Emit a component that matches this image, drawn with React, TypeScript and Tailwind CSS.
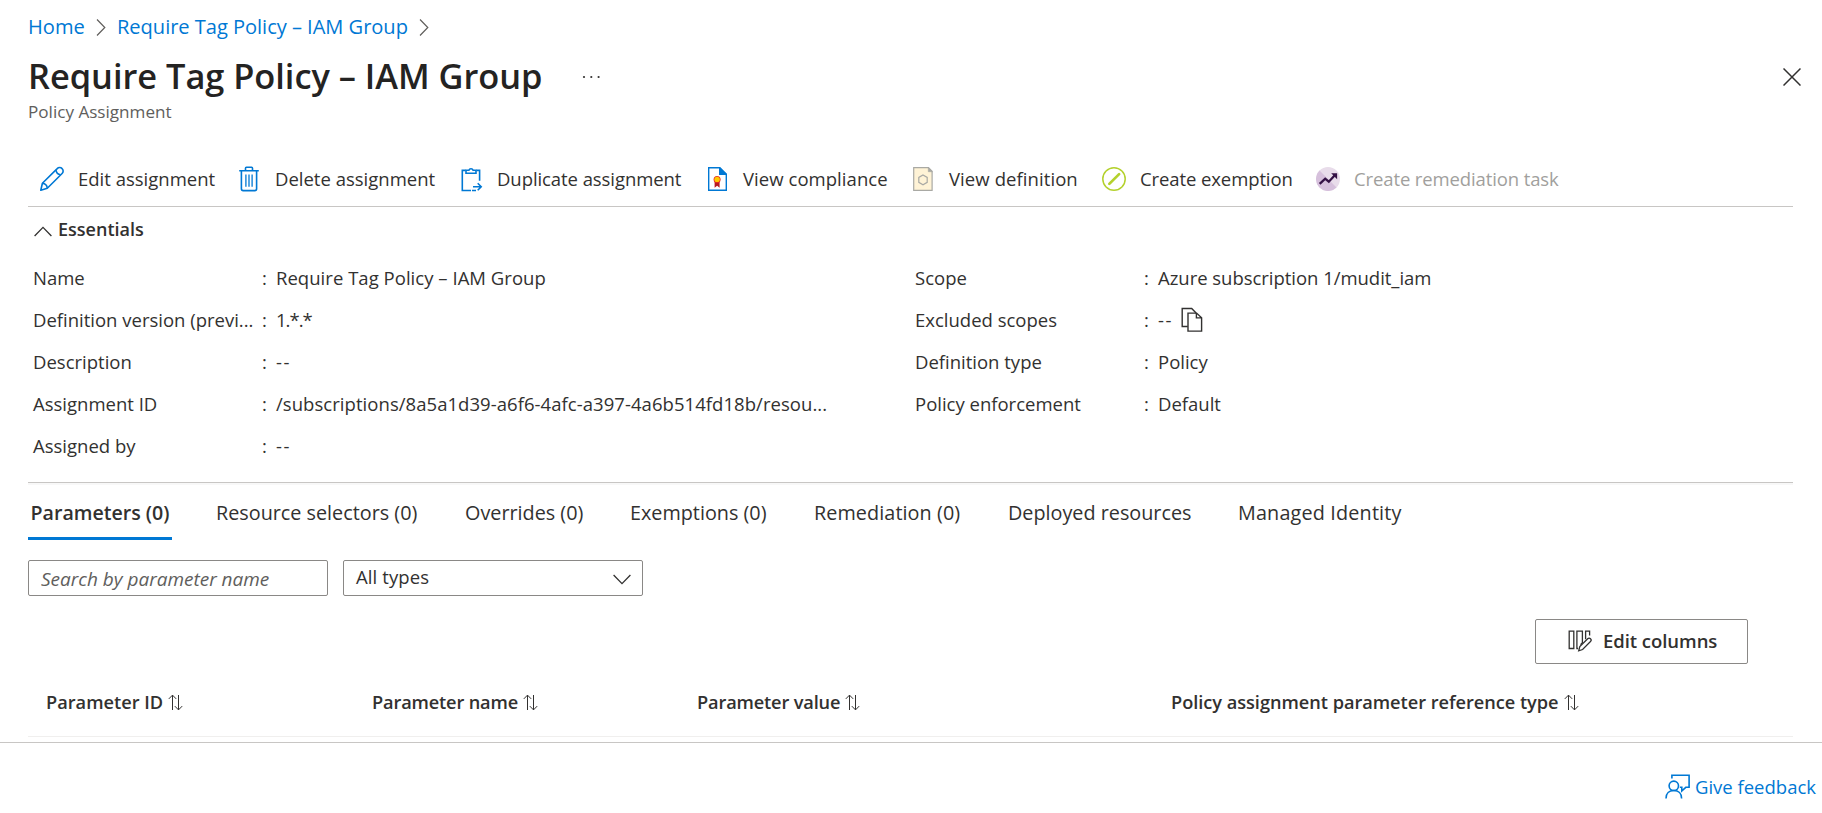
import React from "react";

function Chevron() {
  return (
    <svg width="11" height="19" viewBox="0 0 11 19" fill="none" stroke="#605e5c" strokeWidth="1.2">
      <path d="M1 1.5 8.8 9.5 1 17.5" />
    </svg>
  );
}

function PencilIcon() {
  return (
    <svg className="shrink-0" width="26" height="26" viewBox="0 0 26 26" fill="none" stroke="#0078d4" strokeWidth="1.6" strokeLinejoin="round">
      <path d="M1.8 24.2 3.4 17.3 18.2 2.6a3.4 3.4 0 0 1 4.9 0 3.4 3.4 0 0 1 0 4.9L8.3 22.2Z" />
      <path d="M17 4.1c.3 2.6 2 4.3 4.6 4.6M3.4 17.3c2.7.3 4.6 2.1 4.9 4.9" />
    </svg>
  );
}

function TrashIcon() {
  return (
    <svg width="24" height="26" viewBox="0 0 24 26" fill="none" stroke="#0078d4" strokeWidth="1.6">
      <path d="M2.2 4.8h19.6M8.5 4.5V2.2q0-.9.9-.9h5.2q.9 0 .9.9v2.3M4.4 5v17.8q0 1.8 1.8 1.8h11.6q1.8 0 1.8-1.8V5" />
      <path d="M8.9 8.5v12.3M12 8.5v12.3M15.1 8.5v12.3" strokeWidth="1.3" />
    </svg>
  );
}

function DuplicateIcon() {
  return (
    <svg width="24" height="26" viewBox="0 0 24 26" fill="none" stroke="#0078d4" strokeWidth="1.6">
      <path d="M12 24.5H3.3V4.4h3.4M17.3 4.4h3.3v10.4" />
      <path d="M7 7.2V4.3h2.9a2.2 2.2 0 0 1 4.2 0H17v2.9Z" />
      <path d="M14 20.8h7.8M18.7 17.3l3.5 3.5-3.5 3.5M13 24.5h4" />
    </svg>
  );
}

function ComplianceIcon() {
  return (
    <svg width="24" height="26" viewBox="0 0 24 26">
      <path d="M3.7 1.7h11l6.6 6.6v16H3.7Z" fill="#fff" stroke="#0078d4" strokeWidth="1.4" />
      <path d="M14 1h.9L22 8.1V9h-8Z" fill="#0078d4" />
      <path d="M9.6 15h5v6.8l-2.5-2-2.5 2Z" fill="#b81820" />
      <circle cx="12.1" cy="13.4" r="3.5" fill="#e62b1e" />
      <circle cx="12.1" cy="13.4" r="2.7" fill="#ffca00" />
    </svg>
  );
}

function DefinitionIcon() {
  return (
    <svg width="24" height="26" viewBox="0 0 24 26" stroke="#a9a9a4">
      <path d="M2.7 1.7h14.8l3.6 3.6v19H2.7Z" fill="#fff3d6" strokeWidth="1.2" />
      <path d="M17.3 1.5v4.2h4.2Z" fill="#a9a9a4" strokeWidth=".6" />
      <path d="m12 9 4.2 2.4v4.9L12 18.7l-4.2-2.4v-4.9Z" fill="none" strokeWidth="1.2" />
    </svg>
  );
}

function ExemptionIcon() {
  return (
    <svg width="24" height="24" viewBox="0 0 24 24" fill="none" stroke="#b4d12d">
      <circle cx="12" cy="12" r="11.2" strokeWidth="1.5" />
      <path d="m7.3 16.9 9.8-9.8" strokeWidth="2.7" strokeLinecap="round" />
    </svg>
  );
}

function RemediationIcon() {
  return (
    <svg width="24" height="24" viewBox="0 0 24 24" fill="none">
      <circle cx="12" cy="12" r="12" fill="#e8dcea" />
      <path d="M3.5 3.5a12 12 0 1 0 17 17Z" fill="#d6c0dc" />
      <path d="m3.7 16.9 5.5-5.2 3.6 3 6-6.4" stroke="#341145" strokeWidth="2.3" />
      <path d="M15.2 6.3h5.9v5.9Z" fill="#341145" />
    </svg>
  );
}

function CopyIcon() {
  return (
    <svg width="22" height="26" viewBox="0 0 22 26" fill="none" stroke="#323130" strokeWidth="1.4">
      <path d="M6.8 19.5H1.2V1.5h9.5l4.4 4.6" />
      <path d="M7 6.1h8.6l5 4.6v13.4H7ZM15.4 6.3v4.6h5" />
    </svg>
  );
}

function ColumnsIcon() {
  return (
    <svg width="24" height="22" viewBox="0 0 24 22" fill="none" stroke="#323130" strokeWidth="1.3">
      <path d="M1.2 1.2h4.6v17.3H1.2ZM12.5 14.6l1.9-2V1.2H8.9v17.3h1.2M17.6 9.3V1.2h4v4.4" />
      <path d="m10.7 20.8 1.1-4.2 7.9-7.9a1.9 1.9 0 0 1 2.8 2.8l-7.9 8Z" />
    </svg>
  );
}

function SortIcon() {
  return (
    <svg className="mt-[2px]" width="15" height="17" viewBox="0 0 15 17" fill="none" stroke="#323130" strokeWidth="1">
      <path d="M4.5 16V1.2M.8 4.9l3.7-3.8 3.7 3.8M10.5 1v14.8M6.8 12.1l3.7 3.8 3.7-3.8" />
    </svg>
  );
}

function FeedbackIcon() {
  return (
    <svg width="25" height="25" viewBox="0 0 25 25" fill="none" stroke="#0078d4" strokeWidth="1.6">
      <circle cx="8.8" cy="11.8" r="4.7" />
      <path d="M1 24.4c0-4.8 3.2-7.9 7.8-7.9s7.8 3.1 7.8 7.9M6.9 4.6V1.2h17.2v12.1h-3.3l-4 3.7v-3.7h-2" />
    </svg>
  );
}

const commands = [
  { label: "Edit assignment", icon: <PencilIcon />, width: "w-[197px]", tone: "text-[#323130]" },
  { label: "Delete assignment", icon: <TrashIcon />, width: "w-[222px]", tone: "text-[#323130]" },
  { label: "Duplicate assignment", icon: <DuplicateIcon />, width: "w-[246px]", tone: "text-[#323130] tracking-[-0.07px]" },
  { label: "View compliance", icon: <ComplianceIcon />, width: "w-[206px]", tone: "text-[#323130] tracking-[0.05px]" },
  { label: "View definition", icon: <DefinitionIcon />, width: "w-[191px]", tone: "text-[#323130] tracking-[0.08px]" },
  { label: "Create exemption", icon: <ExemptionIcon />, width: "w-[214px]", tone: "text-[#323130] tracking-[-0.1px]" },
  { label: "Create remediation task", icon: <RemediationIcon />, width: "w-[260px]", tone: "text-[#a19f9d] tracking-[-0.12px]" },
];

const left = [
  { label: "Name", value: "Require Tag Policy – IAM Group", spacing: "tracking-[0.03px]" },
  { label: "Definition version (previ...", value: "1.*.*", spacing: "tracking-[-1px]" },
  { label: "Description", value: "--", spacing: "tracking-[1.6px]" },
  { label: "Assignment ID", value: "/subscriptions/8a5a1d39-a6f6-4afc-a397-4a6b514fd18b/resou...", spacing: "tracking-[0.05px]" },
  { label: "Assigned by", value: "--", spacing: "tracking-[1.6px]" },
];

const right = [
  { label: "Scope", value: "Azure subscription 1/mudit_iam", spacing: "tracking-[-0.03px]" },
  { label: "Excluded scopes", value: "--", spacing: "tracking-[1.6px]" },
  { label: "Definition type", value: "Policy", spacing: "tracking-normal" },
  { label: "Policy enforcement", value: "Default", spacing: "tracking-normal" },
];

const tabs = [
  { label: "Resource selectors (0)", width: "w-[249px]" },
  { label: "Overrides (0)", width: "w-[165px]" },
  { label: "Exemptions (0)", width: "w-[184px]" },
  { label: "Remediation (0)", width: "w-[194px] tracking-[0.08px]" },
  { label: "Deployed resources", width: "w-[230px]" },
  { label: "Managed Identity", width: "w-[180px] tracking-[0.17px]" },
];

const columns = [
  { label: "Parameter ID", width: "w-[326px]" },
  { label: "Parameter name", width: "w-[325px] tracking-[-0.15px]" },
  { label: "Parameter value", width: "w-[474px] tracking-[-0.15px]" },
  { label: "Policy assignment parameter reference type", width: "w-[450px] tracking-[-0.03px]" },
];

function Properties({ rows }: { rows: { label: string; value: string; spacing: string }[] }) {
  return (
    <dl>
      {rows.map(({ label, value, spacing }) => (
        <div key={label} className="flex h-[42px] items-center">
          <dt className="w-[229px]">{label}</dt>
          <dd className="flex items-center">
            <span className="w-[14px]">:</span>
            <span className={spacing}>{value}</span>
            {label === "Excluded scopes" && (
              <span className="ml-[8px]">
                <CopyIcon />
              </span>
            )}
          </dd>
        </div>
      ))}
    </dl>
  );
}

export default function App() {
  return (
    <div className="flex h-[813px] w-[1822px] flex-col overflow-hidden bg-white font-['Open_Sans','Noto_Sans',sans-serif] text-[18.5px] leading-6 whitespace-nowrap text-[#323130]">
      <nav className="flex h-[54px] items-center pl-[28px] text-[20.1px] text-[#0078d4]">
        <a className="w-[68px]">Home</a>
        <Chevron />
        <a className="ml-[10px] w-[302px] tracking-[-0.04px]">Require Tag Policy – IAM Group</a>
        <Chevron />
      </nav>

      <header className="flex h-[46px] items-center pl-[28px]">
        <h1 className="w-[554px] pb-[2px] text-[34.4px] leading-[44px] font-semibold tracking-[-0.03px] text-[#242322]">Require Tag Policy – IAM Group</h1>
        <svg width="20" height="4" viewBox="0 0 20 4" fill="#323130">
          <circle cx="2" cy="2" r="1.1" />
          <circle cx="9.3" cy="2" r="1.1" />
          <circle cx="16.6" cy="2" r="1.1" />
        </svg>
        <svg className="mr-[21px] ml-auto" width="18" height="18" viewBox="0 0 18 18" stroke="#323130" strokeWidth="1.5">
          <path d="m.5.5 17 17m0-17-17 17" />
        </svg>
      </header>
      <p className="pl-[28px] text-[17.1px] text-[#605e5c]">Policy Assignment</p>

      <main className="ml-[28px] flex w-[1765px] flex-col">
        <div className="mt-[28px] flex h-[55px] items-center border-b border-[#c8c6c4] pl-[12px]">
          {commands.map((c) => (
            <button key={c.label} className={`flex shrink-0 items-center ${c.width} ${c.tone}`}>
              <span className="mr-[14px] flex w-[24px] shrink-0 justify-center">{c.icon}</span>
              {c.label}
            </button>
          ))}
        </div>

        <div className="flex h-[50px] items-center pb-[6px] pl-[6px]">
          <svg className="mt-[4px] mr-[6px]" width="18" height="11" viewBox="0 0 18 11" fill="none" stroke="#323130" strokeWidth="1.3">
            <path d="m.6 10 8.4-8.6 8.4 8.6" />
          </svg>
          <span className="text-[18px] font-semibold">Essentials</span>
        </div>

        <section className="grid h-[225px] grid-cols-[882px_1fr] pl-[5px]">
          <Properties rows={left} />
          <Properties rows={right} />
        </section>

        <div className="h-[3px] border-t border-[#c8c6c4] bg-[#f8f8f8]" />
        <div className="flex h-[55px] text-[19.8px]">
          <button className="mr-[44px] h-[55px] w-[144px] border-b-[3px] border-[#0078d4] pt-[3px] text-center text-[19.6px] font-semibold">Parameters (0)</button>
          {tabs.map((t) => (
            <button key={t.label} className={`shrink-0 text-left ${t.width}`}>
              {t.label}
            </button>
          ))}
        </div>

        <div className="mt-[20px] flex gap-[15px]">
          <input
            placeholder="Search by parameter name"
            className="h-[36px] w-[300px] rounded-[2px] border border-[#8a8886] px-[12px] pt-[2px] text-[19px] text-[#323130] italic placeholder:text-[#605e5c]"
          />
          <button className="flex h-[36px] w-[300px] items-center justify-between rounded-[2px] border border-[#8a8886] pr-[11px] pl-[12px]">
            <span className="pb-[3px] tracking-[0.1px]">All types</span>
            <svg className="mt-[3px]" width="18" height="11" viewBox="0 0 18 11" fill="none" stroke="#323130" strokeWidth="1.3">
              <path d="m.6 1 8.4 8.6L17.4 1" />
            </svg>
          </button>
        </div>

        <button className="mt-[23px] mr-[45px] flex h-[45px] w-[213px] items-center self-end rounded-[2px] border border-[#8a8886] pb-[1px] pl-[32px] font-semibold">
          <ColumnsIcon />
          <span className="ml-[11px] tracking-[-0.05px]">Edit columns</span>
        </button>

        <div className="flex h-[73px] items-center border-b border-[#f0efee] pt-[3px] pl-[18px] font-semibold">
          {columns.map((c) => (
            <div key={c.label} className={`flex shrink-0 items-center text-[18.2px] ${c.width}`}>
              <span className="mr-[5px]">{c.label}</span>
              <SortIcon />
            </div>
          ))}
        </div>
      </main>

      <footer className="mt-[5px] flex grow items-center justify-end border-t border-[#c8c6c4] pt-[17px] pr-[6px] text-[#0078d4]">
        <FeedbackIcon />
        <span className="ml-[5px] text-[18.5px]">Give feedback</span>
      </footer>
    </div>
  );
}
